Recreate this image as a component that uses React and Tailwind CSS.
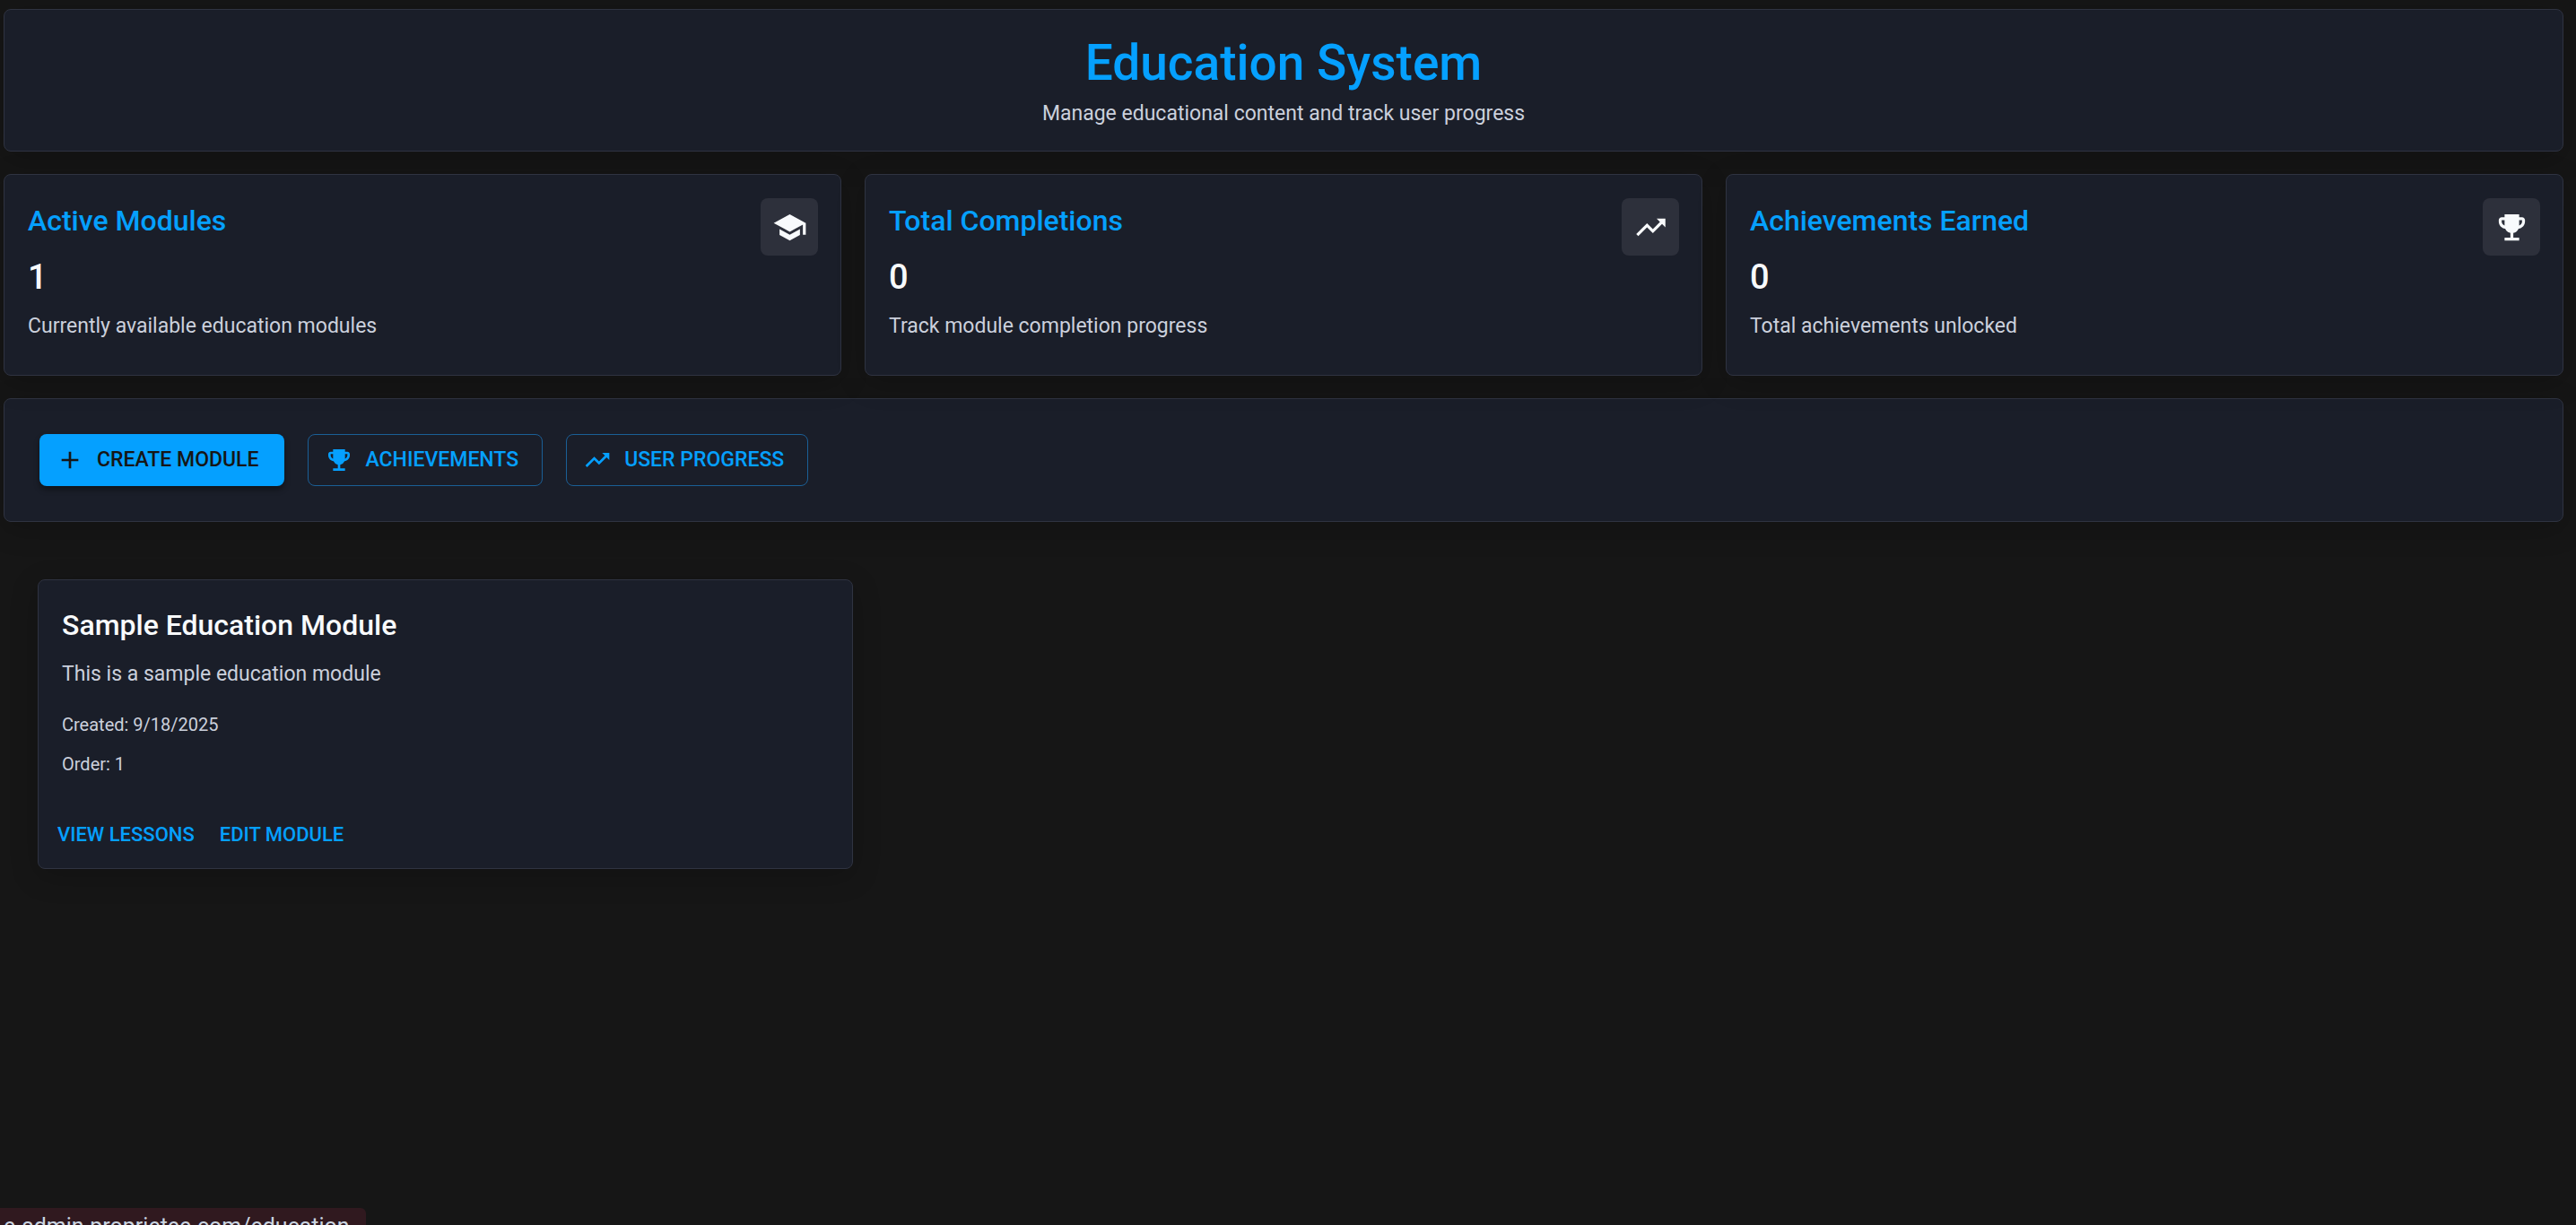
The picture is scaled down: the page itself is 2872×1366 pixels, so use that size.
import {
  MdAdd,
  MdEmojiEvents,
  MdSchool,
  MdTrendingUp,
} from "react-icons/md";

const stats = [
  {
    title: "Active Modules",
    value: 1,
    description: "Currently available education modules",
    icon: MdSchool,
  },
  {
    title: "Total Completions",
    value: 0,
    description: "Track module completion progress",
    icon: MdTrendingUp,
  },
  {
    title: "Achievements Earned",
    value: 0,
    description: "Total achievements unlocked",
    icon: MdEmojiEvents,
  },
];

const modules = [
  {
    id: 1,
    title: "Sample Education Module",
    description: "This is a sample education module",
    created: "9/18/2025",
    order: 1,
  },
];

const panel =
  "rounded-lg border border-[#2f3341] bg-[#1a1e29] shadow-[0_8px_32px_rgba(0,0,0,0.2)]";

function StatCard({ title, value, description, icon: Icon }) {
  return (
    <div className={`${panel} flex items-start justify-between pt-[26px] pr-[25px] pb-[38px] pl-[26px]`}>
      <div>
        <h2 className="text-[32px] leading-[50px] font-medium text-[#05a0ff]">{title}</h2>
        <p className="mt-3.5 text-[38px] leading-[48px] font-medium text-[#f8fafc]">{value}</p>
        <p className="mt-3.5 text-[23px] leading-[33px] text-[#cbd0dc]">{description}</p>
      </div>
      <div className="flex size-16 items-center justify-center rounded-lg bg-[#2d303b] text-[#f8fafc]">
        <Icon size={39} />
      </div>
    </div>
  );
}

function OutlinedButton({ icon: Icon, children }) {
  return (
    <button
      type="button"
      className="flex h-[58px] items-center gap-3.5 rounded-lg border border-[#1a5f96] pr-[26px] pl-[18px] text-[23px] font-medium text-[#05a0ff] uppercase"
    >
      <Icon size={32} />
      {children}
    </button>
  );
}

function ModuleCard({ title, description, created, order }) {
  return (
    <div className={panel}>
      <div className="px-[26px] pt-[26px]">
        <h2 className="text-[32px] leading-[48px] font-medium text-[#f8fafc]">{title}</h2>
        <p className="mt-3.5 text-[23px] leading-[33px] text-[#cbd0dc]">{description}</p>
        <p className="mt-6 text-[20px] leading-[32px] text-[#cbd0dc]">Created: {created}</p>
        <p className="mt-3 text-[20px] leading-[32px] text-[#cbd0dc]">Order: {order}</p>
      </div>
      <div className="flex gap-2 px-[11px] pt-10 pb-4">
        <button type="button" className="h-11 px-2.5 text-[22px] font-medium text-[#05a0ff] uppercase">
          View Lessons
        </button>
        <button type="button" className="h-11 px-2.5 text-[22px] font-medium text-[#05a0ff] uppercase">
          Edit Module
        </button>
      </div>
    </div>
  );
}

export default function App() {
  return (
    <div className="relative min-h-screen overflow-hidden bg-[#161616] pt-2.5 pr-3.5 pl-1 font-[Roboto,sans-serif]">
      <header className={`${panel} px-[26px] pt-[27px] pb-[25px] text-center`}>
        <h1 className="text-[55px] leading-[64px] font-medium text-[#05a0ff]">Education System</h1>
        <p className="mt-2 text-[23px] leading-[33px] text-[#cbd0dc]">
          Manage educational content and track user progress
        </p>
      </header>

      <section className="mt-[25px] grid grid-cols-3 gap-[26px]">
        {stats.map((stat) => (
          <StatCard key={stat.title} {...stat} />
        ))}
      </section>

      <div className={`${panel} mt-[25px] flex gap-[26px] p-[39px]`}>
        <button
          type="button"
          className="flex h-[58px] items-center gap-3.5 rounded-lg bg-[#05a0ff] pr-7 pl-[18px] text-[23px] font-medium text-[#161616] uppercase shadow-[0_4px_6px_rgba(0,0,0,0.4)]"
        >
          <MdAdd size={32} />
          Create Module
        </button>
        <OutlinedButton icon={MdEmojiEvents}>Achievements</OutlinedButton>
        <OutlinedButton icon={MdTrendingUp}>User Progress</OutlinedButton>
      </div>

      <section className="mt-16 grid grid-cols-3 gap-[26px] px-[38px]">
        {modules.map((module) => (
          <ModuleCard key={module.id} {...module} />
        ))}
      </section>

      {/* link target bubble, mostly below the fold */}
      <div className="absolute bottom-0 left-0 h-[19px] overflow-hidden rounded-tr-md bg-[#30191f] pr-[18px] pl-1 text-[25px] leading-[42px] text-[#cbd5e1]">
        e-admin.proprietee.com/education
      </div>
    </div>
  );
}
